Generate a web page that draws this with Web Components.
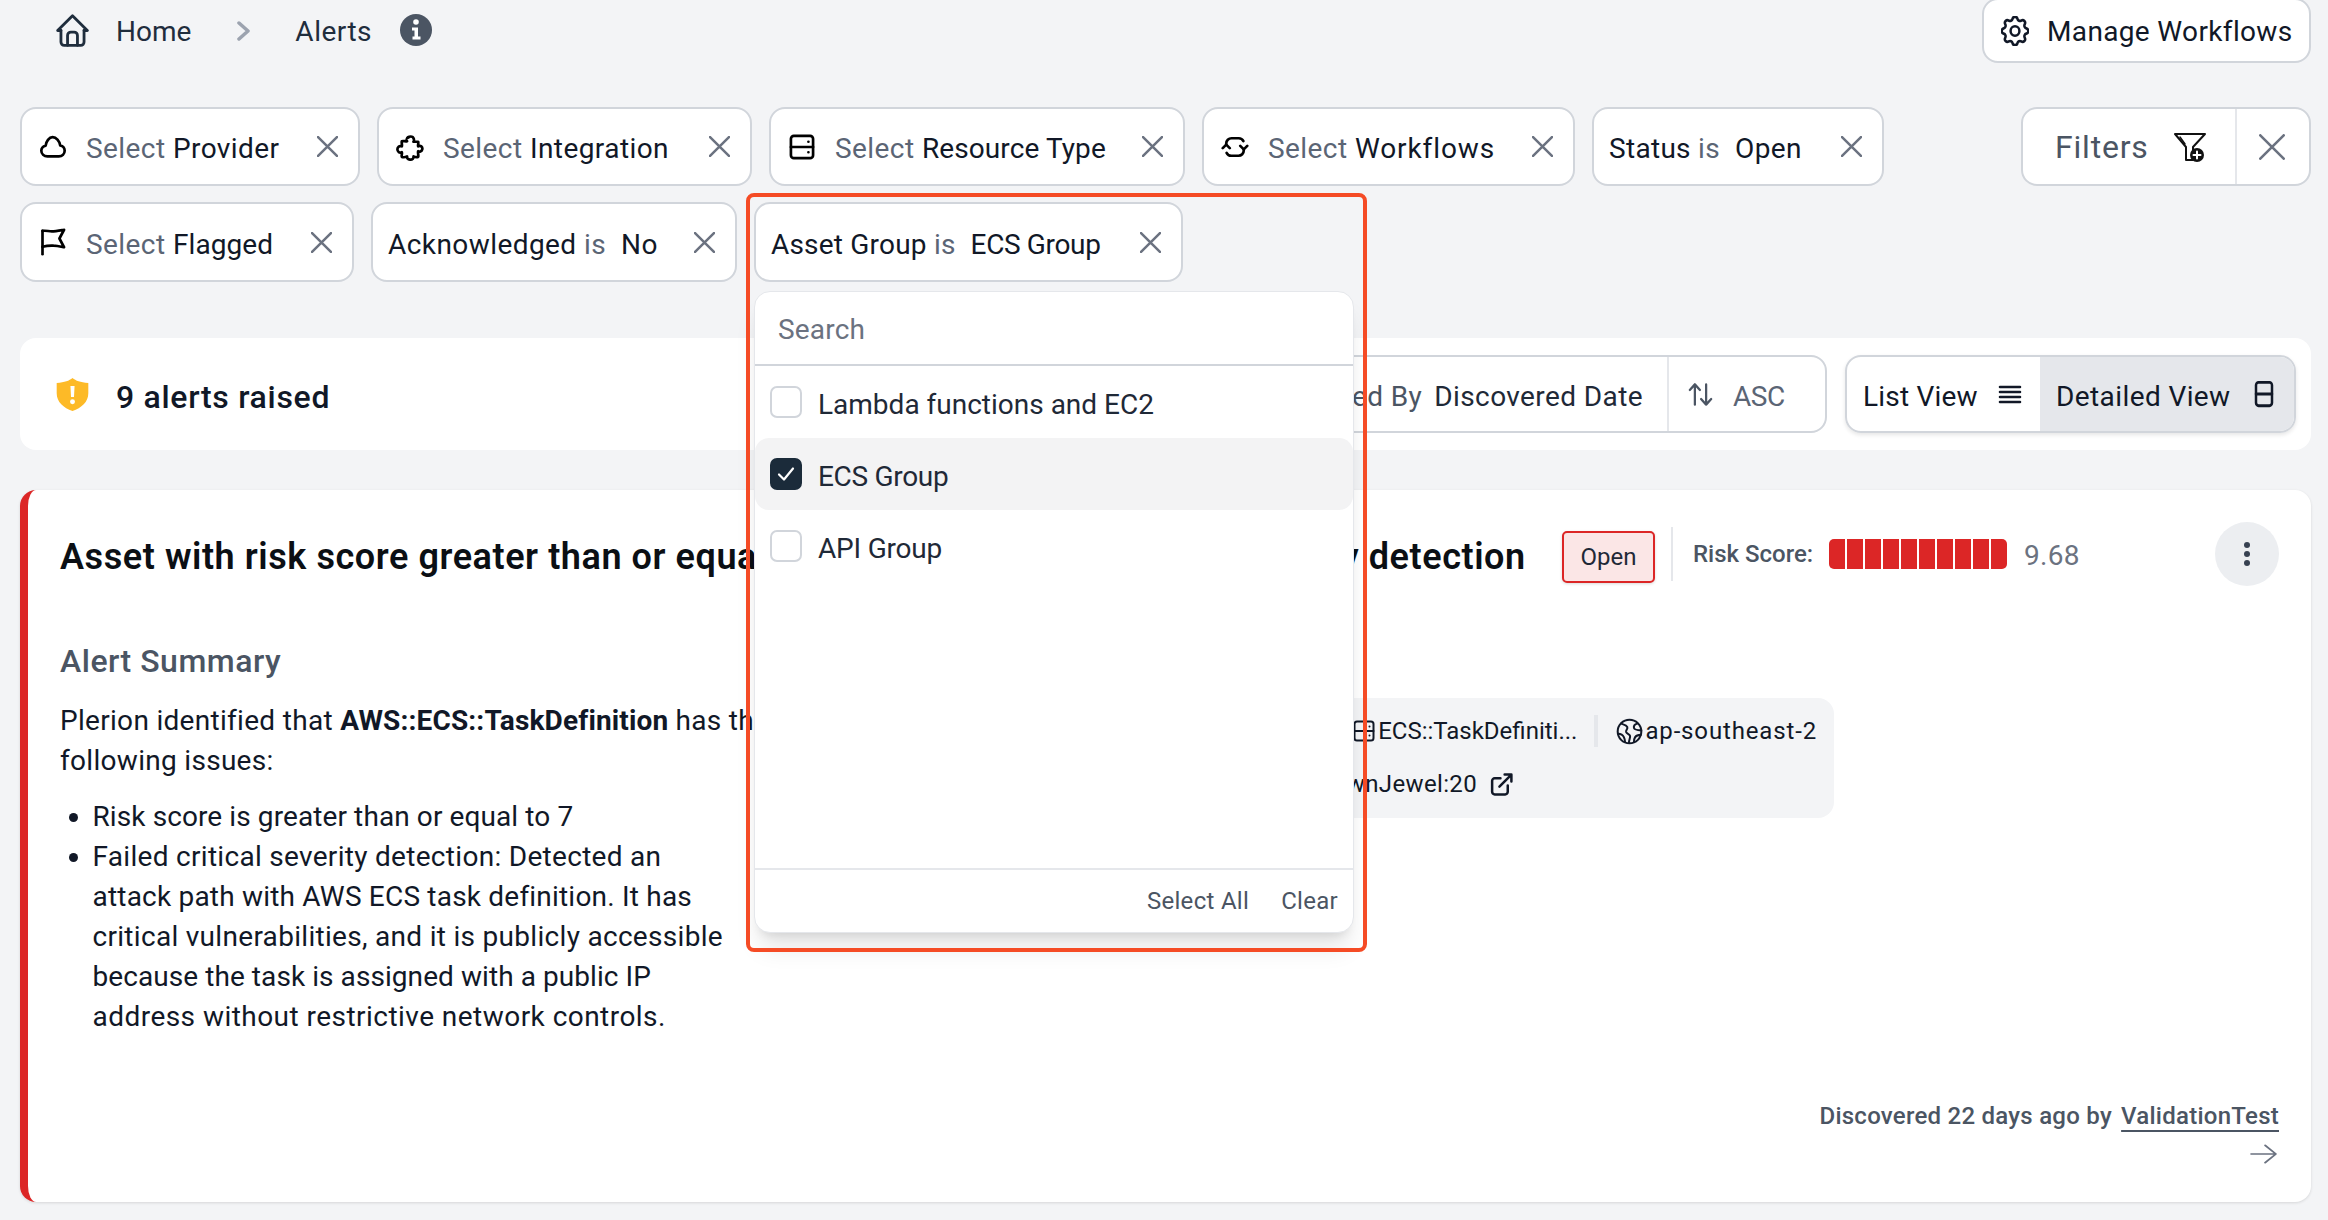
<!DOCTYPE html>
<html lang="en">
<head>
<meta charset="utf-8">
<title>Alerts</title>
<style>
  html, body { margin: 0; height: 1220px; overflow: hidden; background: #f3f4f6; }
  body { font-family: Roboto, "Liberation Sans", sans-serif; font-size: 28px; color: #111827; }
  main { position: relative; display: flex; flex-direction: column; padding: 0 17px 0 20px; height: 1220px; box-sizing: border-box; }
</style>
</head>
<body>
<main>
  <page-header></page-header>
  <filter-bar>
    <filter-chip slot="row1" icon="cloud" lead="Select" style="width:340px">Provider</filter-chip>
    <filter-chip slot="row1" icon="puzzle" lead="Select" style="width:375px">Integration</filter-chip>
    <filter-chip slot="row1" icon="server" lead="Select" style="width:416px"><span style="letter-spacing:.1px">Resource Type</span></filter-chip>
    <filter-chip slot="row1" icon="refresh" lead="Select" style="width:373px"><span style="letter-spacing:.9px">Workflows</span></filter-chip>
    <filter-chip slot="row1" subject="Status" style="width:292px;letter-spacing:.3px"><span style="letter-spacing:.4px">Open</span></filter-chip>
    <filter-chip slot="row2" icon="flag" lead="Select" style="width:334px;height:80px"><span style="letter-spacing:.1px">Flagged</span></filter-chip>
    <filter-chip slot="row2" subject="Acknowledged" style="width:366px;height:80px">No</filter-chip>
    <filter-chip slot="row2" subject="Asset Group" style="width:429px;height:80px;letter-spacing:.2px"><span style="letter-spacing:-.35px">ECS Group</span></filter-chip>
  </filter-bar>
  <alerts-bar></alerts-bar>
  <alert-card></alert-card>
  <asset-dropdown></asset-dropdown>
  <focus-frame></focus-frame>
</main>
<script>
const ICONS = {
  home: '<path d="M5 12H3l9-9 9 9h-2"/><path d="M5 12v7a2 2 0 0 0 2 2h10a2 2 0 0 0 2-2v-7"/><path d="M9 21v-6a2 2 0 0 1 2-2h2a2 2 0 0 1 2 2v6"/>',
  chev: '<path d="M2 2l9 8-9 8"/>',
  cloud: '<path d="M7.2 20C4.3 20 2 18 2 15.300C2 12.900 3.700 11.300 5.700 10.900C6 7.300 8.700 3.500 11.700 3.500C14.700 3.500 17.600 6.900 18.200 10.700C20.400 11.100 22 13 22 15.300C22 18 19.900 20 17 20Z"/>',
  puzzle: '<path d="M9.500 7C9 7 8.500 3 12.500 3C16 3 15.500 7 15 7.500L19 7.500C19.500 9 18.500 10.500 19 11.500C21 10 23 12 22.500 14C22 16 20 16.500 19 15.500C18.500 17 19.500 19 19 20.500C17 21 16 20.500 15 20C15.500 21.500 14 23 12 22.800C10 22.600 9 21 9.500 20C8 20.800 6.500 21 5 20.500C4.500 19 5.500 17.500 5 16.500C3 17.500 1.200 16 1.200 14C1.200 12 3 10.500 5 11.500C5.500 10 4.500 8.500 5 7C6.500 6.500 8 7.500 9.500 7Z"/>',
  server: '<rect x="2.500" y="2.500" width="19" height="19" rx="2.500"/><path d="M2.500 12h19"/><path d="M17.500 7.500v.01M17.500 16.500v.01"/>',
  refresh: '<path d="M1.500 13l3-3 3 3"/><path d="M4.500 10V9a4.500 4.500 0 0 1 4.500-4.500h6a4.500 4.500 0 0 1 4.200 2.500"/><path d="M16.500 11l3 3 3-3"/><path d="M19.500 14v1a4.500 4.500 0 0 1-4.500 4.500H9a4.500 4.500 0 0 1-4.200-2.500"/>',
  flag: '<path d="M3 22.500V2.500"/><path d="M3 2.500c3-.6 5 .4 8 .4 3 0 7-.8 10.500-1.400l-4 7.500 4 7.500c-3-.6-6-1.300-9-1.400-3-.2-6.500.2-9.500 1"/>',
  x: '<path d="M3 3l18 18M21 3L3 21"/>',
  gear: '<path d="M10.325 4.317c.426-1.756 2.924-1.756 3.35 0a1.724 1.724 0 0 0 2.573 1.066c1.543-.94 3.31.826 2.37 2.37a1.724 1.724 0 0 0 1.065 2.572c1.756.426 1.756 2.924 0 3.35a1.724 1.724 0 0 0-1.066 2.573c.94 1.543-.826 3.31-2.37 2.37a1.724 1.724 0 0 0-2.572 1.065c-.426 1.756-2.924 1.756-3.35 0a1.724 1.724 0 0 0-2.573-1.066c-1.543.94-3.31-.826-2.37-2.37a1.724 1.724 0 0 0-1.065-2.572c-1.756-.426-1.756-2.924 0-3.35a1.724 1.724 0 0 0 1.066-2.573c-.94-1.543.826-3.31 2.37-2.37 1 .608 2.296.07 2.572-1.065z"/><circle cx="12" cy="12" r="3"/>',
  sort: '<path d="M7 21V3M2.500 8L7 3l4.500 5"/><path d="M17 3v18M12.500 16l4.500 5 4.500-5"/>',
  lines: '<path d="M2 5h20M2 10h20M2 15h20M2 20h20"/>',
  rows: '<rect x="4" y="2" width="16" height="20" rx="2.500"/><path d="M4 12h16"/>',
  external: '<path d="M18 13v6a2.500 2.500 0 0 1-2.500 2.500h-10A2.500 2.500 0 0 1 3 19V8.500A2.500 2.500 0 0 1 5.500 6H11"/><path d="M15 2.500h6.500V9M10 14L21.500 2.500"/>',
  globe: '<circle cx="12" cy="12" r="10.500"/><path d="M4.500 5c2.500 1 4.500 1 5.500 3 .8 1.800-1.500 2.500-1 4.500.5 1.700 3 1.500 3.500 3.500.3 1.500-1 3.500-1 6"/><path d="M19 5c-2 .5-3.500 2-3 4 .4 1.500 2.500 1.800 6.500 2"/><path d="M2 14c2 0 4 1 5 3 .6 1.300 1 2.500 1 4"/><path d="M22 15c-2 0-4 .5-5 2-.6 1-1 2.500-1 4"/>',
  arrow: '<path d="M1 12h22M13.500 2.500L23 12l-9.500 9.500"/>'
};

class UiIcon extends HTMLElement {
  connectedCallback() {
    const size = this.getAttribute('size') || 24;
    const weight = this.getAttribute('weight') || 2;
    const box = this.getAttribute('box') || '0 0 24 24';
    this.attachShadow({mode: 'open'}).innerHTML = `
      <style>
        :host { display: inline-flex; flex: none; line-height: 0; }
        svg { fill: none; stroke: currentColor; stroke-linecap: round; stroke-linejoin: round; display: block; }
      </style>
      <svg width="${size}" height="${this.getAttribute('tall') || size}" viewBox="${box}" stroke-width="${weight}" preserveAspectRatio="none">${ICONS[this.getAttribute('name')]}</svg>`;
  }
}
customElements.define('ui-icon', UiIcon);

class PageHeader extends HTMLElement {
  connectedCallback() {
    this.attachShadow({mode: 'open'}).innerHTML = `
      <style>
        :host { display: flex; justify-content: space-between; align-items: flex-start; height: 107px; color: #1f2d3d; }
        nav { display: flex; align-items: center; margin: 14px 0 0 36px; height: 33px; }
        nav span { position: relative; top: 1px; }
        .chev { color: #9ca3af; margin: 0 44px 0 46px; }
        .alerts { letter-spacing: .5px; }
        .info { width: 32px; height: 32px; border-radius: 50%; background: #4b5563; color: #fff; display: flex; align-items: center; justify-content: center; margin-left: 28px; margin-top: -2px; }
        .info svg { display: block; }
        button { all: unset; box-sizing: border-box; display: flex; align-items: center; width: 329px; height: 65px; margin-top: -2px; border: 2px solid #d1d5db; border-radius: 16px; background: #fff; padding-left: 17px; color: #111827; font: inherit; letter-spacing: .35px; }
        button span { margin-left: 18px; position: relative; top: 1px; }
      </style>
      <nav>
        <ui-icon name="home" box="2 2 20 20" size="33" weight="1.700"></ui-icon>
        <span style="margin-left:27px">Home</span>
        <ui-icon class="chev" name="chev" box="0 0 14 20" size="14" tall="20" weight="3.500"></ui-icon>
        <span class="alerts">Alerts</span>
        <div class="info"><svg width="12" height="22" viewBox="0 0 12 22" fill="#fff"><circle cx="6" cy="3" r="2.800"/><path d="M2 8.500h6v9h2.500v3h-8v-3h2v-6H2z"/></svg></div>
      </nav>
      <button><ui-icon name="gear" box="2.500 2.500 19 19" size="28" tall="30" weight="1.700"></ui-icon><span>Manage Workflows</span></button>`;
  }
}
customElements.define('page-header', PageHeader);

class FilterChip extends HTMLElement {
  connectedCallback() {
    const icon = this.getAttribute('icon');
    const lead = this.getAttribute('lead');
    const subject = this.getAttribute('subject');
    this.attachShadow({mode: 'open'}).innerHTML = `
      <style>
        :host { display: flex; box-sizing: border-box; align-items: center; flex: none; height: 79px; border: 2px solid #d1d5db; border-radius: 16px; background: #fff; padding: 0 20px 0 15px; color: #111827; letter-spacing: .43px; }
        :host([icon]) { padding-left: 17px; }
        .text { display: flex; position: relative; top: 2px; white-space: pre; }
        .mute { color: #5b6575; }
        .lead { color: #000; margin-right: 19px; }
        .x { margin: 0 0 0 auto; color: #6b7280; }
      </style>
      ${icon ? `<ui-icon class="lead" name="${icon}" size="28" weight="2.300"></ui-icon>` : ''}
      <span class="text">${lead ? `<span class="mute">${lead} </span>` : ''}${subject ? `${subject} <span class="mute">is</span><span style="width:15px"></span>` : ''}<slot></slot></span>
      <ui-icon class="x" name="x" box="2 2 20 20" size="21" weight="2.400"></ui-icon>`;
  }
}
customElements.define('filter-chip', FilterChip);

class FilterBar extends HTMLElement {
  connectedCallback() {
    this.attachShadow({mode: 'open'}).innerHTML = `
      <style>
        :host { display: flex; flex-direction: column; gap: 16px; }
        .row { display: flex; gap: 17px; }
        .filters { display: flex; box-sizing: border-box; margin-left: auto; width: 290px; height: 79px; border: 2px solid #d1d5db; border-radius: 16px; background: #fff; align-items: center; color: #4b5563; }
        .filters .main { display: flex; align-items: center; width: 214px; height: 100%; box-sizing: border-box; padding-left: 32px; border-right: 2px solid #e5e7eb; font-size: 32px; letter-spacing: .8px; }
        .filters svg { margin-left: 25px; color: #111; flex: none; }
        .filters .x { margin-left: 22px; color: #6b7280; }
      </style>
      <div class="row"><slot name="row1"></slot>
        <div class="filters">
          <div class="main">Filters
            <svg width="32" height="30" viewBox="0 0 32 30" fill="none" stroke="currentColor" stroke-width="2" stroke-linejoin="round" stroke-linecap="round"><path d="M1 2h30l-12 13v13h-7V15z"/><path d="M6 5l5 7" stroke-width="1.500"/><circle cx="23" cy="23" r="7" fill="#111" stroke="none"/><path d="M23 19.500v7M19.500 23h7" stroke="#fff"/></svg>
          </div>
          <ui-icon class="x" name="x" box="2 2 20 20" size="26" weight="2"></ui-icon>
        </div>
      </div>
      <div class="row"><slot name="row2"></slot></div>`;
  }
}
customElements.define('filter-bar', FilterBar);

class AlertsBar extends HTMLElement {
  connectedCallback() {
    this.attachShadow({mode: 'open'}).innerHTML = `
      <style>
        :host { display: flex; align-items: center; height: 112px; margin-top: 56px; background: #fff; border-radius: 16px; padding: 0 15px 0 36px; }
        svg.shield { flex: none; }
        h2 { margin: 0 0 0 27px; font-size: 32px; font-weight: 500; letter-spacing: .7px; color: #111827; position: relative; top: 3px; }
        .sort { display: flex; box-sizing: border-box; margin-left: auto; width: 566px; height: 78px; border: 2px solid #d1d5db; border-radius: 16px; align-items: center; color: #4b5563; letter-spacing: .4px; }
        .by { flex: 1; display: flex; justify-content: flex-end; padding-right: 24px; height: 100%; align-items: center; border-right: 2px solid #e5e7eb; white-space: pre; }
        .by span, .by b { position: relative; top: 2px; }
        .by b { font-weight: 400; color: #1f2937; margin-left: 12px; }
        .dir { display: flex; align-items: center; width: 156px; height: 100%; box-sizing: border-box; padding-left: 18px; }
        .dir span { margin-left: 19px; color: #5b6575; letter-spacing: -.4px; position: relative; top: 2px; }
        .toggle { display: flex; box-sizing: border-box; margin-left: 18px; width: 451px; height: 78px; border: 2px solid #d1d5db; border-radius: 16px; overflow: hidden; box-shadow: 0 2px 4px rgba(0,0,0,.1); color: #111827; letter-spacing: .4px; }
        .toggle div { display: flex; align-items: center; height: 100%; box-sizing: border-box; }
        .toggle span { position: relative; top: 2px; }
        .list { width: 193px; padding-left: 16px; letter-spacing: .2px; }
        .list ui-icon { margin-left: auto; margin-right: 18px; }
        .detail { flex: 1; background: #e5e7eb; padding-left: 16px; }
        .detail ui-icon { margin-left: auto; margin-right: 18px; }
      </style>
      <svg class="shield" width="33" height="33" viewBox="0 0 24 24"><path fill="#fdba27" d="M12 0C14.500 2 17.500 3.200 23.500 3.600V11C23.500 17.500 18.500 21.500 12 24C5.500 21.500.5 17.500.5 11V3.600C6.500 3.200 9.500 2 12 0Z"/><path fill="#fff" d="M10.500 5.800h3l-.4 8h-2.200zM12 15.400a1.800 1.800 0 1 1 0 3.600 1.800 1.800 0 0 1 0-3.600z"/></svg>
      <h2>9 alerts raised</h2>
      <div class="sort">
        <div class="by"><span>Sorted By</span><b>Discovered Date</b></div>
        <div class="dir"><ui-icon name="sort" size="27" weight="2"></ui-icon><span>ASC</span></div>
      </div>
      <div class="toggle">
        <div class="list"><span>List View</span><ui-icon name="lines" size="24" weight="2.600"></ui-icon></div>
        <div class="detail"><span>Detailed View</span><ui-icon name="rows" size="24" tall="28" weight="2.500"></ui-icon></div>
      </div>`;
  }
}
customElements.define('alerts-bar', AlertsBar);

class RiskBar extends HTMLElement {
  connectedCallback() {
    const cells = Array.from({length: 10}, () => '<i></i>').join('');
    this.attachShadow({mode: 'open'}).innerHTML = `
      <style>
        :host { display: flex; gap: 2px; width: 178px; height: 30px; border-radius: 5px; overflow: hidden; flex: none; }
        i { flex: 1; background: #dc2626; }
      </style>${cells}`;
  }
}
customElements.define('risk-bar', RiskBar);

class AlertCard extends HTMLElement {
  connectedCallback() {
    this.attachShadow({mode: 'open'}).innerHTML = `
      <style>
        :host { display: flex; flex-direction: column; box-sizing: border-box; height: 712px; margin-top: 40px; background: #fff; border-left: 8px solid #dc2626; border-radius: 16px; padding: 32px 32px 37px 32px; box-shadow: 0 1px 3px rgba(0,0,0,.12); }
        header { display: flex; align-items: center; height: 64px; }
        h1 { margin: 0; font-size: 36px; font-weight: 600; width: 1465px; flex: none; white-space: nowrap; color: #0b0f14; letter-spacing: .57px; position: relative; top: 3px; }
        h1 span { letter-spacing: .09px; }
        .badge { box-sizing: border-box; width: 93px; height: 52px; margin: 6px 0 0 37px; border: 2px solid #dc2626; border-radius: 5px; background: #fbe6e6; display: flex; align-items: center; justify-content: center; font-size: 24px; color: #1f2937; box-shadow: 0 1px 3px rgba(0,0,0,.15); }
        .sep { width: 2px; height: 54px; background: #e5e7eb; margin: 0 20px 0 16px; flex: none; }
        .risk { font-size: 24px; font-weight: 500; color: #4b5563; white-space: nowrap; width: 136px; flex: none; }
        .score { margin-left: 17px; color: #6b7280; letter-spacing: .3px; position: relative; top: 1px; }
        .menu { margin-left: auto; width: 64px; height: 64px; border-radius: 50%; background: #eceef1; display: flex; align-items: center; justify-content: center; flex: none; }
        .body { display: flex; margin-top: 55px; }
        .left { width: 708px; flex: none; letter-spacing: .3px; white-space: nowrap; }
        h3 { margin: 0; font-size: 32px; line-height: 40px; font-weight: 500; color: #4b5563; letter-spacing: .5px; }
        p { margin: 20px 0 0; line-height: 40px; }
        ul { margin: 16px 0 0; padding: 0 0 0 32.500px; line-height: 40px; }
        b { font-weight: 700; letter-spacing: .15px; }
        .panel { box-sizing: border-box; width: 1034px; height: 120px; margin: 57px 445px 0 auto; padding: 13px 17px 0 0; background: #f3f4f6; border-radius: 16px; font-size: 24px; color: #111827; letter-spacing: .35px; }
        .row { display: flex; align-items: center; justify-content: flex-end; height: 40px; }
        .row + .row { justify-content: flex-start; margin-top: 13px; }
        .vr { width: 4px; height: 32px; background: #e5e7eb; margin: 0 18px 0 17px; }
        .type { margin-left: 2px; letter-spacing: 0; }
        .region { margin-left: 2px; letter-spacing: .85px; }
        .tag { width: 677px; text-align: right; margin-right: 12px; }
        footer { margin-top: auto; display: flex; flex-direction: column; align-items: flex-end; font-size: 24px; font-weight: 500; color: #4b5563; letter-spacing: .25px; }
        footer div { position: relative; top: -3px; }
        footer u { margin-left: 3px; text-decoration-thickness: 2px; text-underline-offset: 6px; }
        footer ui-icon { color: #6b7280; margin: 10px 2px 0 0; }
      </style>
      <header>
        <h1>Asset with risk score greater than or equa<span>l to 7 and has a failed critical severit</span>y detection</h1>
        <div class="badge">Open</div>
        <div class="sep"></div>
        <div class="risk">Risk Score:</div>
        <risk-bar></risk-bar>
        <div class="score">9.68</div>
        <div class="menu"><svg width="8" height="26" viewBox="0 0 8 26" fill="#374151"><circle cx="4" cy="4" r="3"/><circle cx="4" cy="13" r="3"/><circle cx="4" cy="22" r="3"/></svg></div>
      </header>
      <div class="body">
        <div class="left">
          <h3>Alert Summary</h3>
          <p>Plerion identified that <b>AWS::ECS::TaskDefinition</b> has the<br>following issues:</p>
          <ul>
            <li style="letter-spacing:.1px">Risk score is greater than or equal to 7</li>
            <li>Failed critical severity detection: Detected an<br><span style="letter-spacing:.2px">attack path with AWS ECS task definition. It has</span><br>critical vulnerabilities, and it is publicly accessible<br><span style="letter-spacing:.07px">because the task is assigned with a public IP</span><br><span style="letter-spacing:.46px">address without restrictive network controls.</span></li>
          </ul>
        </div>
        <div class="panel">
          <div class="row">
            <ui-icon name="server" size="24" weight="2"></ui-icon><span class="type">ECS::TaskDefiniti...</span>
            <div class="vr"></div>
            <ui-icon name="globe" size="27" weight="1.800"></ui-icon><span class="region">ap-southeast-2</span>
          </div>
          <div class="row"><span class="tag">CrownJewel:20</span><ui-icon name="external" size="25" weight="2.400"></ui-icon></div>
        </div>
      </div>
      <footer>
        <div>Discovered 22 days ago by <u>ValidationTest</u></div>
        <ui-icon name="arrow" size="27" tall="22" weight="1.800"></ui-icon>
      </footer>`;
  }
}
customElements.define('alert-card', AlertCard);

class AssetDropdown extends HTMLElement {
  connectedCallback() {
    const options = [['Lambda functions and EC2', false, 0], ['ECS Group', true, -.3], ['API Group', false, -.2]];
    this.attachShadow({mode: 'open'}).innerHTML = `
      <style>
        :host { position: absolute; left: 754px; top: 291px; box-sizing: border-box; display: flex; flex-direction: column; width: 600px; height: 642px; border: 1px solid #e5e7eb; border-radius: 16px; background: #fff; box-shadow: 0 20px 25px -5px rgba(0,0,0,.1), 0 8px 10px -6px rgba(0,0,0,.1); color: #1f2937; }
        .search { box-sizing: border-box; height: 74px; padding: 2px 23px 0; display: flex; align-items: center; border-bottom: 2px solid #d1d5db; color: #6b7280; letter-spacing: .2px; }
        .list { flex: 1; }
        .opt { display: flex; align-items: center; height: 72px; padding-left: 15px; border-radius: 14px; }
        .opt span { position: relative; top: 2px; }
        .opt.on { background: #f3f3f4; }
        .box { box-sizing: border-box; width: 32px; height: 32px; border: 2px solid #d1d5db; border-radius: 7px; margin-right: 16px; display: flex; align-items: center; justify-content: center; background: #fff; }
        .on .box { background: #1b2b3a; border-color: #1b2b3a; }
        .foot { box-sizing: border-box; height: 64px; display: flex; justify-content: flex-end; align-items: center; gap: 32px; padding: 0 15px 0 0; border-top: 2px solid #e5e7eb; font-size: 24px; color: #4b5563; letter-spacing: .3px; }
      </style>
      <div class="search">Search</div>
      <div class="list">
        ${options.map(([name, on, ls]) => `<div class="opt ${on ? 'on' : ''}"><div class="box">${on ? '<svg width="18" height="16" viewBox="0 0 18 16" fill="none" stroke="#fff" stroke-width="2.200" stroke-linecap="round" stroke-linejoin="round"><path d="M2 8.500l5 5L16 2.500"/></svg>' : ''}</div><span style="letter-spacing:${ls}px">${name}</span></div>`).join('')}
      </div>
      <div class="foot"><span>Select All</span><span>Clear</span></div>`;
  }
}
customElements.define('asset-dropdown', AssetDropdown);

class FocusFrame extends HTMLElement {
  connectedCallback() {
    this.attachShadow({mode: 'open'}).innerHTML = `
      <style>
        :host { position: absolute; left: 746px; top: 193px; width: 621px; height: 759px; box-sizing: border-box; border: 4px solid #f54b25; border-radius: 8px; pointer-events: none; }
      </style>`;
  }
}
customElements.define('focus-frame', FocusFrame);
</script>
</body>
</html>
